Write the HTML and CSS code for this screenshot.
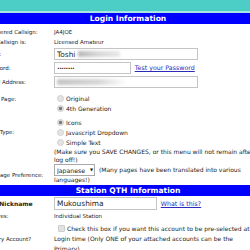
FILE: index.html
```html
<!DOCTYPE html>
<html lang="en">
<head>
  <meta charset="UTF-8">
  <title>Account Settings</title>
  <link rel="stylesheet" href="styles.css">
</head>
<body>
  <div class="topbar"></div>

  <table class="form">
    <colgroup>
      <col class="col-label">
      <col>
    </colgroup>

    <tr class="bar"><th colspan="2">Login Information</th></tr>

    <tr class="row-first">
      <td>Registered Callsign:</td>
      <td>JA4JOE</td>
    </tr>
    <tr class="row-text">
      <td>Your Callsign is:</td>
      <td>Licensed Amateur</td>
    </tr>
    <tr class="row-input">
      <td>Name:</td>
      <td>
        <span class="field">
          <input class="input input-wide" type="text" value="Toshi">
          <span class="blur blur-name"></span>
        </span>
      </td>
    </tr>
    <tr class="row-input">
      <td>Password:</td>
      <td>
        <input class="input input-pass" type="password" value="12345678">
        <a href="#" class="link">Test your Password</a>
      </td>
    </tr>
    <tr class="row-input">
      <td>E-mail Address:</td>
      <td>
        <span class="field">
          <input class="input input-wide" type="text" value="">
          <span class="blur blur-mail"></span>
        </span>
      </td>
    </tr>

    <tr class="row-page">
      <td class="label-top">Home Page:</td>
      <td>
        <label class="opt"><input type="radio" name="page" class="radio">Original</label>
        <label class="opt"><input type="radio" name="page" class="radio" checked>4th Generation</label>
      </td>
    </tr>
    <tr class="row-type">
      <td>Menu Type:</td>
      <td>
        <label class="opt"><input type="radio" name="menu" class="radio" checked>Icons</label>
        <label class="opt"><input type="radio" name="menu" class="radio">Javascript Dropdown</label>
        <label class="opt"><input type="radio" name="menu" class="radio">Simple Text</label>
      </td>
    </tr>
    <tr class="row-note">
      <td></td>
      <td>(Make sure you SAVE CHANGES, or this menu will not remain after you log off!)</td>
    </tr>
    <tr class="row-lang">
      <td>Language Preference:</td>
      <td>
        <span class="select-wrap">
          <select class="select">
            <option>Japanese</option>
          </select>
        </span>
        (Many pages have been translated into various languages!)
      </td>
    </tr>

    <tr class="bar"><th colspan="2">Station QTH Information</th></tr>

    <tr class="row-nick">
      <td class="bold">QTH Nickname</td>
      <td>
        <input class="input input-nick" type="text" value="Mukoushima">
        <a href="#" class="link">What is this?</a>
      </td>
    </tr>
    <tr class="row-text">
      <td>Features:</td>
      <td>Individual Station</td>
    </tr>
    <tr class="row-primary">
      <td>Primary Account?</td>
      <td>
        <label class="check-line"><input type="checkbox" class="check">Check this box if you want this account to be pre-selected at</label>
        Login time (Only ONE of your attached accounts can be the Primary)
      </td>
    </tr>
  </table>
</body>
</html>
```

FILE: styles.css
```css
body {
  margin: 0;
  font-family: "DejaVu Sans", Verdana, sans-serif;
  color: #222;
  background-color: #fff;
  overflow: hidden;
}

.topbar {
  height: 11px;
  background-color: #4ccec6;
  border-bottom: 2px solid #a8e7e3;
}

.form {
  border-collapse: collapse;
  table-layout: fixed;
  width: 290px;
  margin-left: -17px;
  font-size: 5.5px;
}

.col-label {
  width: 71px;
}

.form td {
  padding: 0;
  line-height: 8px;
  vertical-align: middle;
}

.bar th {
  height: 11px;
  padding: 0;
  background-color: #0000ff;
  color: #fff;
  font-size: 7.6px;
  font-weight: bold;
  line-height: 11px;
  text-align: center;
}

.row-first { height: 13px; }
.row-first td { padding-top: 2px; }

.row-text { height: 10px; }

.row-input { height: 14px; }

.row-page td {
  padding: 5px 0 2px;
}

.label-top {
  vertical-align: top !important;
  line-height: 10px !important;
}

.row-type td + td {
  padding-top: 2px;
}

.opt {
  display: block;
  height: 10px;
  line-height: 10px;
  font-size: 6px;
}

.radio {
  -webkit-appearance: none;
  appearance: none;
  display: inline-block;
  vertical-align: middle;
  width: 7px;
  height: 7px;
  margin: -1px 2px 0 3px;
  border: 1px solid #cfcfcf;
  border-radius: 50%;
  background-color: #e4e4e4;
  box-sizing: border-box;
}

.radio:checked {
  background: radial-gradient(circle, #7a7a7a 0, #7a7a7a 1.3px, #dcdcdc 2px);
}

.row-note td {
  font-size: 6px;
  line-height: 8px;
}

.row-lang td + td {
  font-size: 6px;
  line-height: 8px;
  padding-bottom: 1px;
}

.select-wrap {
  position: relative;
  display: inline-block;
  vertical-align: middle;
  margin-right: 2px;
}

.select {
  -webkit-appearance: none;
  appearance: none;
  display: block;
  width: 41px;
  height: 12px;
  padding: 0 0 0 2px;
  border: 1px solid #a9a9a9;
  border-radius: 0;
  background-color: #fff;
  font-family: "DejaVu Sans", Verdana, sans-serif;
  font-size: 6.2px;
  color: #222;
}

.select-wrap::after {
  content: "\25BC";
  position: absolute;
  right: 2px;
  top: 3px;
  font-size: 4px;
  line-height: 6px;
  color: #111;
}

.field {
  position: relative;
  display: inline-block;
  vertical-align: middle;
}

.input {
  display: inline-block;
  vertical-align: middle;
  box-sizing: border-box;
  height: 12px;
  margin: 0;
  padding: 0 0 0 2px;
  border: 1px solid #c4c4c4;
  font-family: "DejaVu Sans", Verdana, sans-serif;
  font-size: 7.4px;
  color: #222;
  background-color: #fff;
}

.input-wide { width: 144px; }
.input-pass { width: 77px; font-size: 4.5px; letter-spacing: -0.5px; }
.input-nick { width: 103px; height: 13px; }

.blur {
  position: absolute;
  top: 3px;
  height: 6px;
  filter: blur(1.5px);
}

.blur-name {
  left: 24px;
  width: 42px;
  background: linear-gradient(to right, #b8b8b8, #d8d8d8 50%, #e8e8e8);
}

.blur-mail {
  left: 3px;
  width: 70px;
  background: linear-gradient(to right, #c4c4c4, #d6d6d6 60%, rgba(230, 230, 230, 0));
}

.link {
  color: #2b2bb5;
  font-size: 6.3px;
  margin-left: 2px;
  vertical-align: middle;
}

.row-nick { height: 15px; }

.bold {
  font-weight: bold;
  font-size: 6px;
}

.row-primary td {
  padding: 3px 0 2px;
}

.row-primary td + td {
  padding-right: 14px;
  font-size: 6px;
  line-height: 10px;
}

.check-line {
  display: block;
  height: 10px;
  line-height: 10px;
  white-space: nowrap;
}

.check {
  -webkit-appearance: none;
  appearance: none;
  display: inline-block;
  vertical-align: middle;
  width: 7px;
  height: 7px;
  margin: -1px 2px 0 4px;
  border: 1px solid #cdcdcd;
  border-radius: 1px;
  background-color: #e2e2e2;
  box-sizing: border-box;
}
```
